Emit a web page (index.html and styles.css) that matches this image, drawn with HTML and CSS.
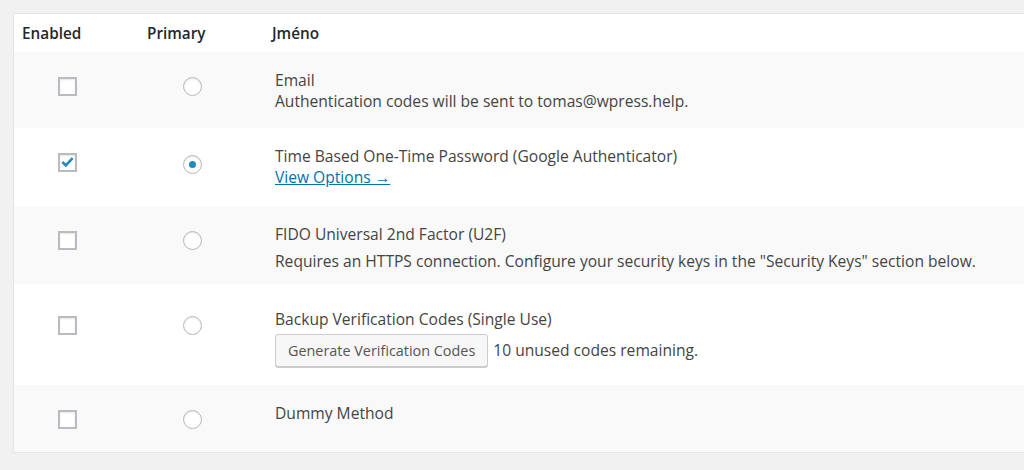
FILE: index.html
```html
<!DOCTYPE html>
<html lang="cs">
<head>
<meta charset="utf-8">
<title>Two-Factor Options</title>
<link rel="stylesheet" href="styles.css">
</head>
<body>
<div class="wrap">
  <table class="methods">
    <colgroup>
      <col class="col-enabled">
      <col class="col-primary">
      <col>
    </colgroup>
    <thead>
      <tr class="head">
        <th class="th-enabled">Enabled</th>
        <th class="th-primary">Primary</th>
        <th class="th-name">Jméno</th>
      </tr>
    </thead>
    <tbody>
      <tr class="row alt r-email">
        <td class="cell-check"><span class="checkbox"></span></td>
        <td class="cell-radio"><span class="radio"></span></td>
        <td class="cell-name">
          <div class="label">Email</div>
          <div class="desc">Authentication codes will be sent to tomas@wpress.help.</div>
        </td>
      </tr>
      <tr class="row r-totp">
        <td class="cell-check"><span class="checkbox checked"><svg viewBox="0 0 20 20" width="17" height="17"><path d="M3.2 9.4 L7.8 13.9 L16.8 4.2" fill="none" stroke="#1e8cbe" stroke-width="3.6" stroke-linejoin="miter" stroke-linecap="butt"/></svg></span></td>
        <td class="cell-radio"><span class="radio checked"></span></td>
        <td class="cell-name">
          <div class="label">Time Based One-Time Password (Google Authenticator)</div>
          <div class="desc"><a class="link" href="#">View Options →</a></div>
        </td>
      </tr>
      <tr class="row alt r-u2f">
        <td class="cell-check"><span class="checkbox"></span></td>
        <td class="cell-radio"><span class="radio"></span></td>
        <td class="cell-name">
          <div class="label">FIDO Universal 2nd Factor (U2F)</div>
          <p class="desc spaced">Requires an HTTPS connection. Configure your security keys in the "Security Keys" section below.</p>
        </td>
      </tr>
      <tr class="row r-backup">
        <td class="cell-check"><span class="checkbox"></span></td>
        <td class="cell-radio"><span class="radio"></span></td>
        <td class="cell-name">
          <div class="label">Backup Verification Codes (Single Use)</div>
          <div class="actions">
            <button class="button" type="button">Generate Verification Codes</button>
            <span class="remaining">10 unused codes remaining.</span>
          </div>
        </td>
      </tr>
      <tr class="row alt r-dummy">
        <td class="cell-check"><span class="checkbox"></span></td>
        <td class="cell-radio"><span class="radio"></span></td>
        <td class="cell-name">
          <div class="label">Dummy Method</div>
        </td>
      </tr>
    </tbody>
  </table>
</div>
</body>
</html>
```
FILE: styles.css
```css
html, body {
  margin: 0;
  padding: 0;
  overflow: hidden;
}
body {
  background: #f1f1f1;
  font-family: "Open Sans", "Noto Sans", sans-serif;
  font-size: 15.6px;
  line-height: 21px;
  color: #444;
}
.wrap {
  padding: 13px 0 0 13px;
}
.methods {
  width: 1030px;
  border-collapse: separate;
  border-spacing: 0;
  table-layout: fixed;
  background: #fff;
  border: 1px solid #e5e5e5;
  box-shadow: 0 1px 1px rgba(0, 0, 0, 0.04);
}
.col-enabled { width: 125px; }
.col-primary { width: 125px; }
.head { height: 38px; }
.head th {
  text-align: left;
  font-weight: 600;
  font-size: 15.3px;
  color: #23282d;
  padding: 0 0 0 8px;
  vertical-align: middle;
}
.row td {
  vertical-align: top;
  padding: 18px 0 0 0;
}
.row.alt { background: #f9f9f9; }
.r-email { height: 76px; }
.r-totp { height: 78px; }
.r-u2f { height: 78px; }
.r-backup { height: 101px; }
.r-backup td { padding-top: 25px; }
.r-dummy { height: 67px; }
.row .cell-check { padding-left: 44px; }
.row .cell-radio { padding-left: 44px; }
.row .cell-name { padding-left: 11px; }
.checkbox {
  display: flex;
  align-items: center;
  justify-content: center;
  box-sizing: border-box;
  width: 19px;
  height: 19px;
  margin-top: 7px;
  border: 2px solid #b8bcc0;
  background: #fff;
  box-shadow: inset 0 1px 2px rgba(0, 0, 0, 0.1);
}
.radio {
  display: flex;
  align-items: center;
  justify-content: center;
  box-sizing: border-box;
  width: 19px;
  height: 19px;
  margin-top: 7px;
  border: 1.5px solid #b4b9be;
  border-radius: 50%;
  background: #fff;
  box-shadow: inset 0 1px 2px rgba(0, 0, 0, 0.1);
}
.radio.checked { margin-top: 9px; }
.radio.checked::after {
  content: "";
  width: 7px;
  height: 7px;
  border-radius: 50%;
  background: #1e8cbe;
}
.label, .desc { margin: 0; }
.desc.spaced { margin-top: 6px; }
.link {
  color: #0073aa;
  text-decoration: underline;
}
.actions {
  display: flex;
  align-items: center;
  gap: 5px;
  margin-top: 4px;
}
.button {
  box-sizing: border-box;
  height: 33px;
  padding: 0 12px;
  font-family: inherit;
  font-size: 14.4px;
  color: #555;
  background: #f7f7f7;
  border: 1px solid #cccccc;
  border-radius: 3px;
  box-shadow: 0 1px 0 #cccccc;
}
.remaining { color: #444; }
```
